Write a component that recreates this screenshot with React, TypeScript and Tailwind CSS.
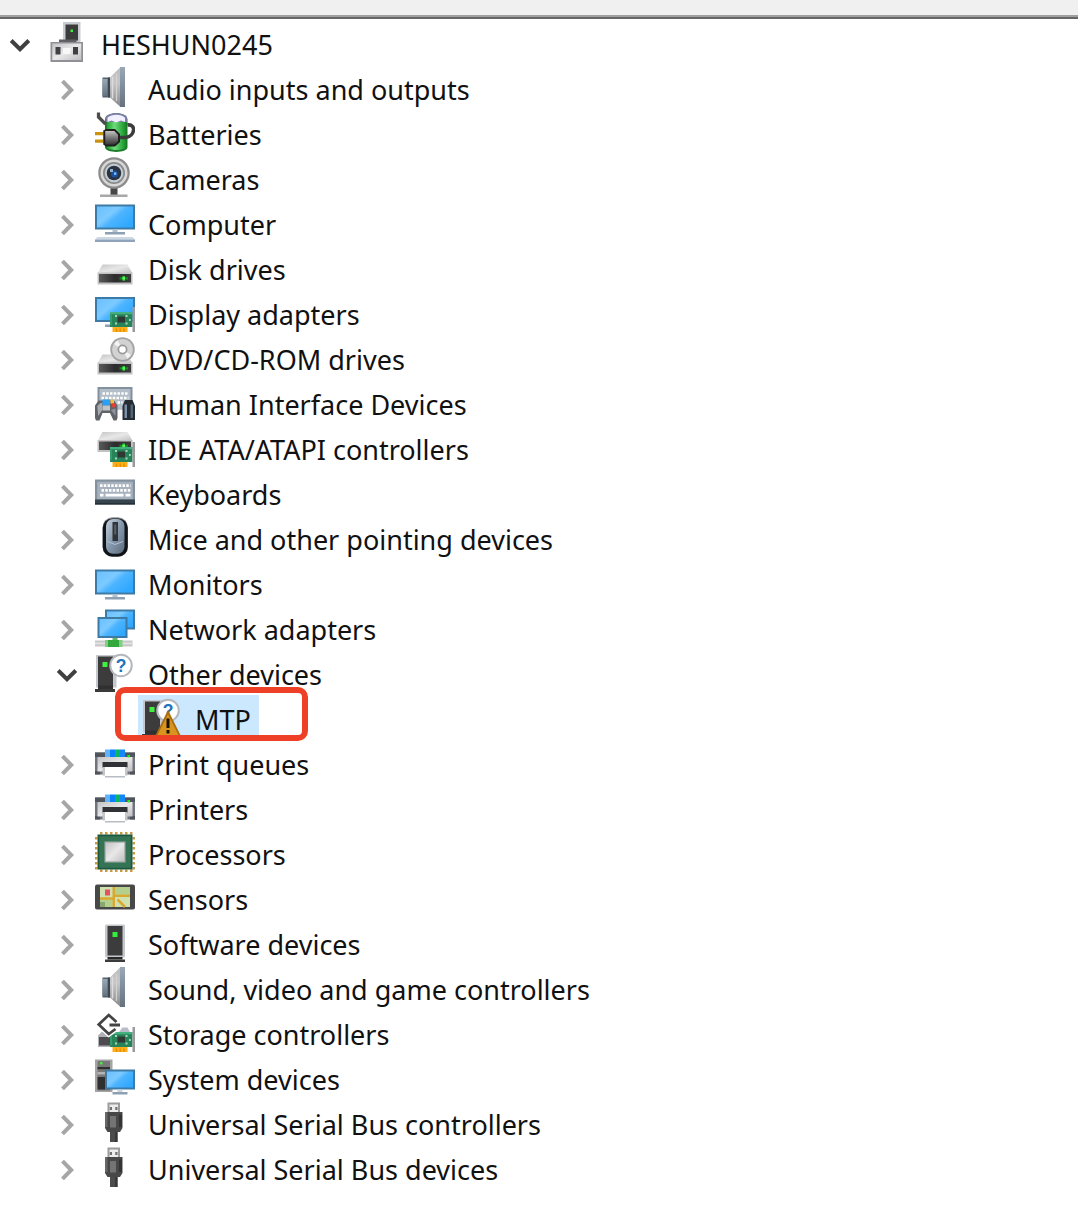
import { useState, type ReactNode } from "react";

/* ---------- shared gradients ---------- */

function Gradients() {
  return (
    <svg className="absolute h-0 w-0" aria-hidden="true">
      <defs>
        <linearGradient id="screen" x1="0" y1="0" x2="1" y2="0.7">
          <stop offset="0" stopColor="#6cc0ff" />
          <stop offset="0.42" stopColor="#7ccaff" />
          <stop offset="0.6" stopColor="#4cb4ff" />
          <stop offset="1" stopColor="#30a8ff" />
        </linearGradient>
        <linearGradient id="silver" x1="0" y1="0" x2="1" y2="1">
          <stop offset="0" stopColor="#c4c4c6" />
          <stop offset="0.5" stopColor="#e8e8e9" />
          <stop offset="1" stopColor="#c0c0c2" />
        </linearGradient>
        <linearGradient id="steel" x1="0" y1="0" x2="0" y2="1">
          <stop offset="0" stopColor="#9aa8b6" />
          <stop offset="0.4" stopColor="#8493a2" />
          <stop offset="1" stopColor="#66727e" />
        </linearGradient>
        <linearGradient id="cone" x1="0" y1="0" x2="0" y2="1">
          <stop offset="0" stopColor="#bcbcbe" />
          <stop offset="0.4" stopColor="#c6c6c8" />
          <stop offset="1" stopColor="#88888a" />
        </linearGradient>
        <linearGradient id="front" x1="0" y1="0" x2="1" y2="0">
          <stop offset="0" stopColor="#5a5a5a" />
          <stop offset="0.5" stopColor="#2c2c2c" />
          <stop offset="1" stopColor="#3c3c3c" />
        </linearGradient>
        <linearGradient id="mouse" x1="0" y1="0" x2="1" y2="1">
          <stop offset="0" stopColor="#c4d0dc" />
          <stop offset="0.5" stopColor="#8497ac" />
          <stop offset="1" stopColor="#5c6b7c" />
        </linearGradient>
        <linearGradient id="green" x1="0" y1="0" x2="1" y2="0">
          <stop offset="0" stopColor="#22a030" />
          <stop offset="0.4" stopColor="#6cdc7a" />
          <stop offset="1" stopColor="#149024" />
        </linearGradient>
        <linearGradient id="plug" x1="0" y1="0" x2="0" y2="1">
          <stop offset="0" stopColor="#c4c4c4" />
          <stop offset="0.5" stopColor="#787878" />
          <stop offset="1" stopColor="#383838" />
        </linearGradient>
      </defs>
    </svg>
  );
}

/* ---------- icon parts, on a 16 × 16 grid ---------- */

type Box = { x: number; y: number; w: number; h: number; fill: string };

function R({ x, y, w, h, fill }: Box) {
  return <rect x={x} y={y} width={w} height={h} fill={fill} />;
}

function Screen({ x, y, w, h }: Omit<Box, "fill">) {
  return (
    <>
      <R x={x} y={y} w={w} h={h} fill="#3d7aa6" />
      <R x={x + 0.8} y={y + 0.8} w={w - 1.6} h={h - 1.6} fill="url(#screen)" />
    </>
  );
}

function Drive({ y }: { y: number }) {
  return (
    <g transform={`translate(0 ${y})`}>
      <path d="M3 0H13L15 3.5H1Z" fill="url(#silver)" />
      <R x={1} y={3.2} w={14} h={4.8} fill="#c2c2c4" />
      <R x={1.6} y={3.8} w={12.8} h={3.4} fill="url(#front)" />
      <R x={9.8} y={5.1} w={3.4} h={0.9} fill="#178a20" />
      <R x={11} y={4.6} w={1} h={1.9} fill="#2fc83a" />
      <R x={11} y={5.1} w={1} h={0.9} fill="#5cff60" />
    </g>
  );
}

function Card() {
  return (
    <>
      <R x={7} y={13.6} w={6} h={2.4} fill="#ffae1a" />
      <path d="M8.6 14.6V16M10.1 14.6V16M11.6 14.6V16" stroke="#e08d00" strokeWidth="0.5" />
      <R x={6} y={8} w={9} h={6} fill="#278458" />
      <R x={6} y={8} w={9} h={0.9} fill="#44b080" />
      <R x={6} y={8.9} w={0.8} h={4.4} fill="#339c6a" />
      <R x={9} y={9.8} w={3} h={2.4} fill="#303836" />
      <path
        d="M8 9.2h.8v.8H8zM12.2 9.2h.8v.8h-.8zM8 12.2h.8v.8H8zM12.2 12.2h.8v.8h-.8zM13.6 10.8h.7v.8h-.7z"
        fill="#a8d4c0"
      />
      <R x={15} y={6} w={1} h={10} fill="#9a9a9e" />
    </>
  );
}

function Speaker() {
  return (
    <>
      <path d="M6 4.2 10.2 0V16L6 12.2Z" fill="url(#cone)" />
      <path d="M7 3.8V12.6" stroke="#dcdcdc" strokeWidth="0.6" />
      <path d="M8.6 2.6V13.6" stroke="#d2d2d2" strokeWidth="0.5" />
      <R x={10} y={0} w={2} h={16} fill="url(#steel)" />
      <R x={3} y={4.2} w={3} h={8} fill="#54626f" />
      <R x={3} y={4.8} w={2} h={6.8} fill="url(#steel)" />
      <R x={5.2} y={4.2} w={0.8} h={8} fill="#3c4854" />
    </>
  );
}

function Battery() {
  return (
    <>
      <path d="M4 3C4-.4 13-.4 13 3V14C13 16.6 4 16.6 4 14Z" fill="#1c7c2a" />
      <path d="M4.8 3.5H12.3V14C12 15.6 5 15.6 4.8 14Z" fill="url(#green)" />
      <path d="M4.2 4V2C6-.2 11-.2 12.8 2V4Z" fill="#7c7ea8" />
      <path d="M5 4V2.3C6.5.7 10.6.7 12 2.3V4L10.4 3.4 8.5 4.2 6.6 3.4Z" fill="#f0f0ff" />
      <path d="M1.4.2V2L4.2 4.8" fill="none" stroke="#4c4c4c" strokeWidth="1.3" />
      <path d="M13 5.2C16.6 4.6 16 9.8 12.4 10.2H9" fill="none" stroke="#3c3c3c" strokeWidth="1.4" />
      <R x={0} y={8} w={3.4} h={1.3} fill="#c89410" />
      <R x={0} y={11} w={3.4} h={1.3} fill="#c89410" />
      <path d="M3.3 7.4 4.4 6.8H8L10 8.8V12L8 13.8H4.4L3.3 13Z" fill="#202020" />
      <path d="M4.1 7.6H7.7L9.2 9.1V11.7L7.7 13H4.1Z" fill="url(#plug)" />
    </>
  );
}

function Camera() {
  return (
    <>
      <R x={6.2} y={12.4} w={2.8} h={3} fill="#484848" />
      <R x={2} y={15} w={11} h={1} fill="#a8a8a8" />
      <circle cx="7.6" cy="6.4" r="6.3" fill="#8c8c8c" />
      <circle cx="7.6" cy="6.4" r="5.4" fill="#d8d8d8" />
      <circle cx="7.6" cy="6.4" r="4.4" fill="#8a8a8a" />
      <circle cx="7.6" cy="6.4" r="3.7" fill="#c4ccd4" />
      <circle cx="7.6" cy="6.4" r="2.9" fill="#2a3440" />
      <circle cx="7.8" cy="6.8" r="1.4" fill="#1c50a0" />
      <R x={6} y={4.8} w={1.2} h={1.2} fill="#8cb0d0" />
      <R x={7.6} y={6.2} w={0.9} h={0.9} fill="#80c8ff" />
    </>
  );
}

function Computer() {
  return (
    <>
      <Screen x={0} y={1} w={16} h={10} />
      <R x={7} y={11} w={2} h={1} fill="#b4c2d0" />
      <R x={4} y={12} w={8} h={1} fill="#8da0b4" />
      <path d="M1 14H15L16 15H0Z" fill="#ccd8e4" />
      <R x={0} y={15} w={16} h={1} fill="#8fa4ba" />
    </>
  );
}

function DisplayAdapter() {
  return (
    <>
      <Screen x={0} y={2} w={16} h={10} />
      <R x={4} y={13} w={3} h={1} fill="#8da0b4" />
      <Card />
    </>
  );
}

function Dvd() {
  return (
    <>
      <Drive y={7} />
      <circle cx="11" cy="5" r="4.9" fill="#a4a4a4" />
      <circle cx="11" cy="5" r="4.2" fill="#d2d2d2" />
      <path d="M11 5 7.6 2.8 9 1.3ZM11 5 14.4 7.2 13 8.7Z" fill="#f4f4f4" />
      <circle cx="11" cy="5" r="2" fill="#9a9a9a" />
      <circle cx="11" cy="5" r="1.3" fill="#ffffff" />
    </>
  );
}

function Hid() {
  return (
    <>
      <R x={1} y={2} w={14} h={9} fill="#8290a0" />
      <R x={1.8} y={2.8} w={12.4} h={8} fill="#b4bec8" />
      <path d="M3 4.6H13.4M2.6 6.4H13.4M9 8.2H11" stroke="#ffffff" strokeWidth="1" strokeDasharray="1 .5" />
      <path
        d="M1.4 7.4H7.6L9 9.4V14.4L8.6 15.4H7.4L6 12.4H3L1.8 15.4H.4L0 14.4V9.4Z"
        fill="#606468"
      />
      <path d="M.9 9.6 2.2 8.4H2.9V11.2L1.3 13.6Z" fill="#a8acb0" />
      <path d="M6.4 11.2 8.2 10.6V13.6Z" fill="#9094a0" />
      <R x={3} y={7} w={3} h={2.4} fill="#28a0f8" />
      <R x={3} y={9.4} w={3} h={2} fill="#c0c4c8" />
      <R x={6.2} y={7} w={1.4} h={1.6} fill="#f0c040" />
      <R x={6.8} y={8.6} w={1.3} h={1.5} fill="#e84030" />
      <path d="M11 15.2V9.6L12 7.2H15L16 9.6V15.2Z" fill="#242c34" />
      <R x={11.8} y={9} w={1} h={5.4} fill="#7c90a8" />
      <R x={14.2} y={9} w={1} h={5.4} fill="#506478" />
    </>
  );
}

function Ide() {
  return (
    <>
      <Drive y={2} />
      <Card />
    </>
  );
}

function Keyboard() {
  return (
    <>
      <R x={0} y={3} w={16} h={8.4} fill="#8492a0" />
      <R x={0.9} y={3.9} w={14.2} h={7} fill="#a8b2be" />
      <path d="M2 5.4H14.2" stroke="#ffffff" strokeWidth="1.1" strokeDasharray="1 .5" />
      <path d="M2.6 7.3H14.2" stroke="#ffffff" strokeWidth="1.1" strokeDasharray="1 .5" />
      <path d="M2 9.2H3.4M4.2 9.2H11.4M12.2 9.2H14.2" stroke="#ffffff" strokeWidth="1.1" />
      <R x={0} y={11} w={16} h={2} fill="#36444e" />
      <R x={0} y={12.4} w={16} h={0.6} fill="#263038" />
    </>
  );
}

function Mouse() {
  return (
    <>
      <rect x="3" y="0.1" width="10.2" height="15.9" rx="4" fill="#8c9094" />
      <rect x="3.1" y="0.6" width="10" height="15.2" rx="3.8" fill="#101418" />
      <rect x="4.4" y="0.8" width="7.4" height="13.9" rx="2.8" fill="url(#mouse)" />
      <path d="M5 9.8 8 11 11.2 9.8" fill="none" stroke="#b4c2d0" strokeWidth="0.4" />
      <R x={7} y={2} w={2.2} h={7.6} fill="#303438" />
      <R x={7.7} y={3} w={0.8} h={4} fill="#5c6064" />
    </>
  );
}

function Monitor() {
  return (
    <>
      <Screen x={0} y={3} w={16} h={10} />
      <R x={7} y={13} w={2} h={1} fill="#b4c2d0" />
      <R x={4} y={14} w={8} h={1} fill="#8da0b4" />
    </>
  );
}

function Network() {
  return (
    <>
      <Screen x={4} y={1} w={12} h={8} />
      <Screen x={1} y={4} w={12} h={8.4} />
      <R x={0} y={13.4} w={15} h={2.4} fill="#c8c8c8" />
      <R x={0} y={14.2} w={15} h={0.7} fill="#e4e4e4" />
      <R x={7} y={12.4} w={2} h={1.4} fill="#62b866" />
      <R x={4} y={13.2} w={7} h={2.8} fill="#7cd080" />
      <R x={5.2} y={13.2} w={4.4} h={2.8} fill="#34a83c" />
    </>
  );
}

function UnknownDevice() {
  return (
    <>
      <R x={0.4} y={1.2} w={8.2} h={13} fill="#c4c8cc" />
      <R x={1.2} y={1.8} w={6} h={12.4} fill="#3c3c3c" />
      <R x={1.2} y={13.4} w={6} h={2} fill="#303030" />
      <R x={0} y={14.8} w={8} h={1.2} fill="#3a3a3a" />
      <R x={3} y={4} w={2} h={2} fill="#40f040" />
      <circle cx="10.4" cy="5.4" r="4.3" fill="#ffffff" stroke="#b4b8bc" strokeWidth="0.8" />
      <text
        x="10.4"
        y="7.9"
        textAnchor="middle"
        fill="#1c74bc"
        className="font-['Liberation_Sans'] text-[7px] font-bold"
      >
        ?
      </text>
    </>
  );
}

function UnknownWarning() {
  return (
    <>
      <UnknownDevice />
      <path d="M10.4 6 15.2 15.6H5.6Z" fill="#d8941c" stroke="#a86c10" strokeWidth="0.7" />
      <path d="M10.4 8.6V12.4M10.4 13.2V14.6" stroke="#181000" strokeWidth="1.2" />
    </>
  );
}

function Printer() {
  return (
    <>
      <R x={0} y={4.2} w={16} h={8.8} fill="#70747c" />
      <R x={0} y={4.2} w={16} h={1.8} fill="#50545c" />
      <R x={0} y={11.6} w={2} h={1.4} fill="#50545c" />
      <R x={14} y={11.6} w={2} h={1.4} fill="#50545c" />
      <R x={1} y={6} w={14} h={5.8} fill="url(#silver)" />
      <R x={4} y={3} w={2} h={3} fill="#60b4ff" />
      <R x={6} y={3} w={2} h={3} fill="#0a80ff" />
      <R x={8} y={3} w={2} h={3} fill="#0cb464" />
      <R x={10} y={3} w={2} h={3} fill="#1488f8" />
      <R x={13} y={5.2} w={1} h={1} fill="#20f020" />
      <R x={3} y={8} w={10} h={2.4} fill="#303236" />
      <R x={3} y={10} w={10} h={3.4} fill="#c4c6ca" />
      <R x={4} y={10} w={8} h={4.2} fill="#b8bcc4" />
      <R x={4} y={10} w={8} h={3.6} fill="#ffffff" />
    </>
  );
}

function Processor() {
  return (
    <>
      <path
        d="M2 .5H15M2 15.5H15M.5 2V15M15.5 2V15"
        stroke="#c89a44"
        strokeWidth="1"
        strokeDasharray="1 1"
      />
      <R x={1} y={1} w={14} h={14} fill="#1c5840" />
      <R x={1.7} y={1.7} w={12.6} h={12.6} fill="#347354" />
      <R x={3.8} y={3.8} w={8.4} h={8.4} fill="#a4aca8" />
      <R x={4.3} y={4.3} w={7.4} h={7.4} fill="url(#silver)" />
    </>
  );
}

function Sensors() {
  return (
    <>
      <rect x="0" y="3" width="16" height="10" rx="0.8" fill="#484848" />
      <R x={2} y={4} w={12} h={8} fill="#cfe2ae" />
      <path d="M8 4H14V7H8ZM2 9H7V12H2Z" fill="#b4d08c" />
      <path d="M2 8.6H7.5M7.5 7.5H14M7.5 4V12M9 9 12 12" fill="none" stroke="#d8a830" strokeWidth="1" />
      <R x={4} y={5} w={2} h={2.4} fill="#e85068" />
      <R x={2} y={10} w={2} h={2} fill="#88a870" />
    </>
  );
}

function SoftwareDevice() {
  return (
    <>
      <rect x="4" y="1" width="8" height="13.2" rx="0.6" fill="#c4c8cc" />
      <R x={5} y={1.6} w={6} h={11.8} fill="#3c3c3c" />
      <R x={7} y={4} w={2} h={2} fill="#30f038" />
      <R x={5} y={14} w={6} h={1} fill="#282828" />
      <R x={4} y={15} w={8} h={1} fill="#3c3c3c" />
    </>
  );
}

function Storage() {
  return (
    <>
      <path d="M2.6 8H8V14H1.2V9.4Z" fill="#b0b0b6" />
      <R x={1.6} y={10} w={5} h={3.4} fill="#4c4c50" />
      <path d="M9.6 8 11 6.2H13L14 8Z" fill="#b8bcc8" />
      <Card />
      <path
        d="M8.6 4 5.5 1.2 1.5 5 5.5 8.8 8.8 6.4M5.8 5.2H10"
        fill="none"
        stroke="#ffffff"
        strokeWidth="2.2"
      />
      <path
        d="M8.6 4 5.5 1.2 1.5 5 5.5 8.8 8.2 6.8M5.8 5.2H10"
        fill="none"
        stroke="#444444"
        strokeWidth="1.1"
      />
    </>
  );
}

function SystemDevice() {
  return (
    <>
      <R x={0} y={1} w={7} h={13} fill="#a4a4a4" />
      <R x={1} y={1.6} w={5} h={11.8} fill="#787878" />
      <R x={2} y={2} w={1} h={1} fill="#48e848" />
      <R x={1} y={4} w={5} h={0.9} fill="#303030" />
      <R x={1} y={6} w={5} h={1} fill="#b4b4b4" />
      <R x={1} y={8} w={3} h={5} fill="#303030" />
      <Screen x={4} y={5} w={12} h={8} />
      <R x={9} y={13} w={2} h={1} fill="#ccd6e0" />
      <R x={7} y={14} w={6} h={1} fill="#8da0b4" />
    </>
  );
}

function Usb() {
  return (
    <>
      <R x={5} y={0.2} w={5} h={4.4} fill="#9c9c9c" />
      <R x={5.8} y={1} w={3.4} h={3.2} fill="#ececec" />
      <R x={5.9} y={2} w={0.9} h={1.2} fill="#707070" />
      <R x={8.1} y={2} w={0.9} h={1.2} fill="#707070" />
      <path d="M4 4H11V10.4L10 12H5L4 10.4Z" fill="#484848" />
      <R x={4} y={4} w={1} h={6} fill="#686868" />
      <R x={6} y={5.6} w={2.4} h={4.6} fill="#747474" />
      <R x={9.6} y={5} w={1.2} h={5} fill="#343434" />
      <R x={6} y={12} w={3} h={4} fill="#4c4c4c" />
      <R x={8} y={12} w={1} h={4} fill="#383838" />
    </>
  );
}

function HostComputer() {
  return (
    <>
      <R x={6} y={0} w={7} h={8} fill="#c8ccd0" />
      <R x={7} y={1} w={5} h={6.4} fill="#3c3c3c" />
      <R x={9} y={3} w={1} h={1} fill="#38f040" />
      <R x={4.4} y={7} w={7} h={1.2} fill="#606064" />
      <R x={1} y={8} w={13} h={8} fill="#909096" />
      <R x={1.7} y={8.6} w={11.6} h={6.6} fill="url(#silver)" />
      <R x={3} y={10} w={2} h={3} fill="#404044" />
      <R x={6} y={10.4} w={3} h={2.4} fill="#f8f8f8" />
      <R x={10} y={10} w={2} h={3} fill="#404044" />
    </>
  );
}

/* ---------- device tree ---------- */

type Device = {
  name: string;
  icon: ReactNode;
  children?: Device[];
  leaf?: boolean;
};

const categories: Device[] = [
  { name: "Audio inputs and outputs", icon: <Speaker /> },
  { name: "Batteries", icon: <Battery /> },
  { name: "Cameras", icon: <Camera /> },
  { name: "Computer", icon: <Computer /> },
  { name: "Disk drives", icon: <Drive y={7} /> },
  { name: "Display adapters", icon: <DisplayAdapter /> },
  { name: "DVD/CD-ROM drives", icon: <Dvd /> },
  { name: "Human Interface Devices", icon: <Hid /> },
  { name: "IDE ATA/ATAPI controllers", icon: <Ide /> },
  { name: "Keyboards", icon: <Keyboard /> },
  { name: "Mice and other pointing devices", icon: <Mouse /> },
  { name: "Monitors", icon: <Monitor /> },
  { name: "Network adapters", icon: <Network /> },
  {
    name: "Other devices",
    icon: <UnknownDevice />,
    children: [{ name: "MTP", icon: <UnknownWarning />, leaf: true }],
  },
  { name: "Print queues", icon: <Printer /> },
  { name: "Printers", icon: <Printer /> },
  { name: "Processors", icon: <Processor /> },
  { name: "Sensors", icon: <Sensors /> },
  { name: "Software devices", icon: <SoftwareDevice /> },
  { name: "Sound, video and game controllers", icon: <Speaker /> },
  { name: "Storage controllers", icon: <Storage /> },
  { name: "System devices", icon: <SystemDevice /> },
  { name: "Universal Serial Bus controllers", icon: <Usb /> },
  { name: "Universal Serial Bus devices", icon: <Usb /> },
];

function Icon({ children }: { children: ReactNode }) {
  return (
    <svg viewBox="0 0 16 16" className="size-10 shrink-0" aria-hidden="true">
      {children}
    </svg>
  );
}

function Chevron({ open }: { open: boolean }) {
  return (
    <svg viewBox="0 0 24 24" className="size-6" fill="none" strokeWidth="4" aria-hidden="true">
      {open ? (
        <path d="M3.2 7.5 12 16.2 20.8 7.5" stroke="#404040" />
      ) : (
        <path d="M7.5 3.2 16.2 12 7.5 20.8" stroke="#a6a6a6" />
      )}
    </svg>
  );
}

function SelectedRow({ device }: { device: Device }) {
  return (
    <div className="relative flex h-[45px] pl-11">
      <div className="-mt-0.5 flex h-[42px] items-start bg-[#cce8ff] pt-0.5 pr-2 pl-1">
        <Icon>{device.icon}</Icon>
        <span className="pl-[13px] leading-[45px]">{device.name}</span>
      </div>
      <div className="pointer-events-none absolute -top-2.5 left-[21px] h-[54px] w-[193px] rounded-[10px] border-6 border-[#ee4027]" />
    </div>
  );
}

function Node({ device, initiallyOpen = false }: { device: Device; initiallyOpen?: boolean }) {
  const [open, setOpen] = useState(initiallyOpen);
  if (device.leaf) {
    return (
      <li role="treeitem" aria-selected="true">
        <SelectedRow device={device} />
      </li>
    );
  }
  return (
    <li role="treeitem" aria-selected="false" aria-expanded={open}>
      <div className="flex h-[45px] items-start">
        <button
          type="button"
          aria-label={`Toggle ${device.name}`}
          onClick={() => setOpen(!open)}
          className="mr-2 flex h-[45px] w-10 shrink-0 items-center justify-center"
        >
          <Chevron open={open} />
        </button>
        <Icon>{device.icon}</Icon>
        <span className="pl-[13px] leading-[45px] whitespace-nowrap">{device.name}</span>
      </div>
      {open && device.children && (
        <ul role="group" className="pl-[47px]">
          {device.children.map((child) => (
            <Node key={child.name} device={child} initiallyOpen={Boolean(child.children)} />
          ))}
        </ul>
      )}
    </li>
  );
}

export default function App() {
  return (
    <main className="min-h-screen bg-white font-['Noto_Sans',sans-serif] text-[27px] text-[#111111]">
      <Gradients />
      <div className="h-[19px] border-b-2 border-[#666666] bg-[#f0f0f0]">
        <div className="h-[17px] border-b-2 border-[#a0a0a0]" />
      </div>
      <ul role="tree" aria-label="Devices" className="pt-[3px]">
        <Node device={{ name: "HESHUN0245", icon: <HostComputer />, children: categories }} initiallyOpen />
      </ul>
    </main>
  );
}
